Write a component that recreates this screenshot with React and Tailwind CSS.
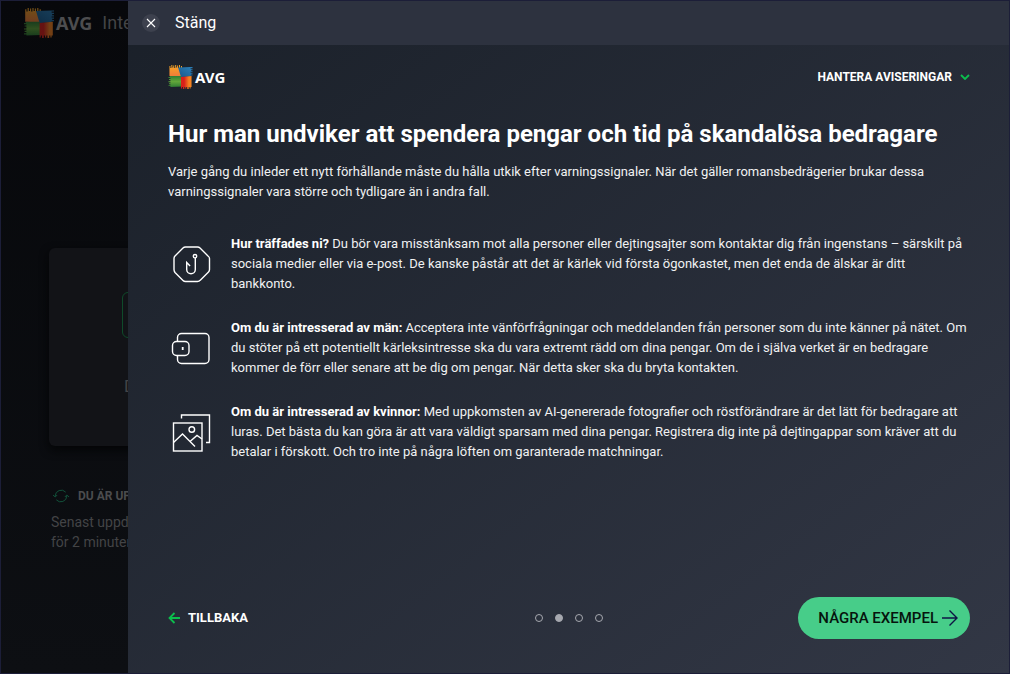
import { useState } from 'react';

const LOGO_COLORS = {
  orange: '#f7a823',
  orangeDark: '#ee7a3a',
  blue: '#2c80b8',
  blueDark: '#17598c',
  green: '#62a63a',
  greenDark: '#2f7d33',
  red: '#d9201a',
  redDark: '#f58220',
};

const AvgMark = ({ id, className }) => (
  <svg viewBox="0 0 50 50" className={className} aria-hidden="true">
    <defs>
      <linearGradient id={`${id}-o`} x1="0" y1="0" x2="0" y2="1">
        <stop offset="0" stopColor={LOGO_COLORS.orange} />
        <stop offset="1" stopColor={LOGO_COLORS.orangeDark} />
      </linearGradient>
      <linearGradient id={`${id}-b`} x1="1" y1="0" x2="0" y2="1">
        <stop offset="0" stopColor={LOGO_COLORS.blue} />
        <stop offset="1" stopColor={LOGO_COLORS.blueDark} />
      </linearGradient>
      <linearGradient id={`${id}-g`} x1="0" y1="0" x2="0" y2="1">
        <stop offset="0" stopColor={LOGO_COLORS.greenDark} />
        <stop offset="0.5" stopColor={LOGO_COLORS.green} />
        <stop offset="1" stopColor={LOGO_COLORS.greenDark} />
      </linearGradient>
      <linearGradient id={`${id}-r`} x1="0" y1="0" x2="1" y2="0">
        <stop offset="0.3" stopColor={LOGO_COLORS.red} />
        <stop offset="0.75" stopColor={LOGO_COLORS.redDark} />
      </linearGradient>
    </defs>
    <path fill={`url(#${id}-o)`} d="M2 23V2h2v4h2V0h2v5h2V1h2v5h2V0h2v5h2V1h2v5h2V0h2v6h2V2h2v4h-5l5 18z" />
    <path fill={`url(#${id}-b)`} d="M20 5l25-1h5v2h-4v2h4v2h-3v2h3v2h-4v2h4v2h-3v2h3v2h-4v2h2L26 25z" />
    <path fill={`url(#${id}-g)`} d="M2 23h24l4 22-26 1v-2H0v-2h4v-2H1v-2h3v-2H0v-2h4v-3H1v-2h3v-2H0v-2h3v-2H0z" />
    <path fill={`url(#${id}-r)`} d="M26 25l22-2v23h-2v3h-2v-3h-2v4h-3v-4h-2v3h-2v-3h-2v4h-3v-4h-2v3h-2z" />
  </svg>
);

const HookIcon = () => (
  <svg viewBox="0 1 48 48" className="h-12 w-12 shrink-0" fill="none" stroke="#fff" strokeWidth="1.4" aria-hidden="true">
    <path strokeLinejoin="round" d="M17.5 8h12q1.5 0 2.500 1l8 8q1.500 1 1.500 2.500v11q0 1.500-1 2.500l-8 8q-1.500 1.500-3 1.500h-12q-1.500 0-2.500-1l-8-8q-1-1.500-1-3v-11q0-1.500 1-2.500l8-8q1-1 2.500-1z" />
    <circle cx="27" cy="17.200" r="1.700" />
    <path d="M27.300 19v11.500a4.300 4.300 0 0 1-8.600 0V23.500l3.400 3.500" />
  </svg>
);

const WalletIcon = () => (
  <svg viewBox="0 1 48 48" className="h-12 w-12 shrink-0" fill="none" stroke="#fff" strokeWidth="1.4" aria-hidden="true">
    <path d="M9.500 19v-4.500a4 4 0 0 1 4-4H37a4 4 0 0 1 4 4V36.500a4 4 0 0 1-4 4H13.500a4 4 0 0 1-4-4v-4" />
    <rect x="4.500" y="18.500" width="16.500" height="14" rx="4" />
    <path strokeWidth="1.800" d="M14.700 24v3" />
  </svg>
);

const PicturesIcon = () => (
  <svg viewBox="0 1 48 48" className="h-12 w-12 shrink-0" fill="none" stroke="#fff" strokeWidth="1.4" aria-hidden="true">
    <path d="M13.500 11.500V8h28v27.500H38" />
    <rect x="5.500" y="16" width="28.500" height="28" />
    <circle cx="23.800" cy="22.500" r="2.800" />
    <path d="M5.500 35.500l9-8.500 12.500 12.500M22 34.500l7-6 5 3.500" />
  </svg>
);

const TIPS = [
  {
    icon: HookIcon,
    lead: 'Hur träffades ni?',
    text: 'Du bör vara misstänksam mot alla personer eller dejtingsajter som kontaktar dig från ingenstans – särskilt på sociala medier eller via e-post. De kanske påstår att det är kärlek vid första ögonkastet, men det enda de älskar är ditt bankkonto.',
  },
  {
    icon: WalletIcon,
    lead: 'Om du är intresserad av män:',
    text: 'Acceptera inte vänförfrågningar och meddelanden från personer som du inte känner på nätet. Om du stöter på ett potentiellt kärleksintresse ska du vara extremt rädd om dina pengar. Om de i själva verket är en bedragare kommer de förr eller senare att be dig om pengar. När detta sker ska du bryta kontakten.',
  },
  {
    icon: PicturesIcon,
    lead: 'Om du är intresserad av kvinnor:',
    text: 'Med uppkomsten av AI-genererade fotografier och röstförändrare är det lätt för bedragare att luras. Det bästa du kan göra är att vara väldigt sparsam med dina pengar. Registrera dig inte på dejtingappar som kräver att du betalar i förskott. Och tro inte på några löften om garanterade matchningar.',
  },
];

/* Dimmed application window behind the drawer */
const Backdrop = () => (
  <aside className="flex w-[127px] shrink-0 flex-col overflow-hidden bg-linear-to-b from-[#07080b] to-[#0d0f13] whitespace-nowrap">
    <div className="flex items-center pt-[7px] pl-[23px]">
      <AvgMark id="dim" className="h-[30px] w-[30px] shrink-0 opacity-45" />
      <span className="ml-[2px] font-['Noto_Sans'] text-[18px] leading-[30px] font-bold text-[#4d4d4f]">AVG</span>
      <span className="ml-[10px] text-[18px] leading-[30px] text-[#434446]">Inte</span>
    </div>

    <div className="mt-[210px] ml-12 flex h-[198px] w-[220px] shrink-0 flex-col rounded-md bg-[#121317] pt-11 pl-[73px] shadow-[0_4px_10px_#040506]">
      <div className="h-[46px] w-[54px] rounded-md border border-[#0f4a2a]"></div>
      <p className="mt-9 pl-[2px] text-[17px] leading-6 text-[#434446]">D</p>
    </div>

    <div className="mt-10 flex items-center gap-[9px] pl-[52px]">
      <svg viewBox="0 0 16 16" className="h-4 w-4 shrink-0" fill="none" stroke="#12513a" aria-hidden="true">
        <path d="M2.200 8.500V8a6 6 0 0 1 10.500-3.800M13.800 7.500V8a6 6 0 0 1-10.500 3.800" />
        <path d="M0 7l2.200 2 2-2M16 9l-2.200-2-2 2" />
      </svg>
      <span className="text-[12px] leading-5 font-bold text-[#4b4c4e]">DU ÄR UP</span>
    </div>
    <p className="mt-[6px] pl-[50px] text-[14px] leading-5 text-[#434446]">
      Senast uppd
      <br />
      för 2 minuter
    </p>
  </aside>
);

const App = () => {
  const [page, setPage] = useState(1);

  return (
    <div className="flex min-h-screen border border-[#1c1e38] bg-[#0a0b0f] font-[Roboto,sans-serif]">
      <Backdrop />

      <main className="flex min-w-0 flex-1 flex-col bg-linear-to-br from-[#1a2029] to-[#323745]">
        {/* Title bar */}
        <header className="flex h-11 items-center gap-[15px] bg-[#2d323f] px-[14px]">
          <button aria-label="Stäng" className="flex h-[18px] w-[18px] items-center justify-center rounded-full bg-[#3d414e]">
            <svg viewBox="0 0 10 10" className="h-[10px] w-[10px]" stroke="#fff" strokeWidth="1.100" aria-hidden="true">
              <path d="M1 1l8 8M9 1l-8 8" />
            </svg>
          </button>
          <span className="text-[16px] leading-6 text-white">Stäng</span>
        </header>

        <div className="flex flex-1 flex-col pt-5 pr-[39px] pb-[34px] pl-10">
          <div className="flex h-6 items-center justify-between">
            <div className="flex items-center gap-[2px] text-white">
              <AvgMark id="main" className="h-6 w-[25px]" />
              <span className="font-['Noto_Sans'] text-[15px] leading-6 font-bold">AVG</span>
            </div>
            <button className="flex items-center gap-2 text-[12px] leading-5 font-bold text-white">
              HANTERA AVISERINGAR
              <svg viewBox="0 0 10 6" className="h-[6px] w-[10px]" fill="none" stroke="#0cbf4d" strokeWidth="1.800" aria-hidden="true">
                <path d="M1 1l4 4 4-4" />
              </svg>
            </button>
          </div>

          <h1 className="mt-[29px] text-[24px] leading-8 font-bold text-white">
            Hur man undviker att spendera pengar och tid på skandalösa bedragare
          </h1>
          <p className="mt-3 text-[13px] leading-5 text-[#f0f1f2]">
            Varje gång du inleder ett nytt förhållande måste du hålla utkik efter varningssignaler. När det gäller romansbedrägerier brukar dessa varningssignaler vara större och tydligare än i andra fall.
          </p>

          <ul className="mt-8 flex flex-col gap-6">
            {TIPS.map(({ icon: Icon, lead, text }) => (
              <li key={lead} className="flex items-center gap-[15px]">
                <Icon />
                <p className="text-[13px] leading-5 text-[#f0f1f2]">
                  <strong className="font-bold text-white">{lead}</strong> {text}
                </p>
              </li>
            ))}
          </ul>

          {/* Footer navigation */}
          <footer className="mt-auto grid grid-cols-[1fr_auto_1fr] items-center">
            <button className="flex items-center gap-2 justify-self-start text-[13px] leading-5 font-bold text-white">
              <svg viewBox="0 0 12 12" className="h-3 w-3" fill="none" stroke="#0cbf4d" strokeWidth="1.800" aria-hidden="true">
                <path d="M12 6H2M6.500 1L1.500 6l5 5" />
              </svg>
              TILLBAKA
            </button>
            <div className="flex gap-3">
              {[0, 1, 2, 3].map((index) => (
                <button
                  key={index}
                  aria-label={`Sida ${index + 1}`}
                  onClick={() => setPage(index)}
                  className={`h-2 w-2 rounded-full border border-[#a6a8af] ${page === index ? 'bg-[#a6a8af]' : ''}`}
                />
              ))}
            </div>
            <button className="flex h-[42px] items-center gap-1 justify-self-end rounded-full bg-[#47cd89] pr-3 pl-5 text-[15px] leading-5 font-medium text-[#06140d]">
              NÅGRA EXEMPEL
              <svg viewBox="0 0 16 16" className="h-4 w-4" fill="none" stroke="#0e1445" strokeWidth="1.400" aria-hidden="true">
                <path d="M0 8h15M7.500 .5L15 8l-7.500 7.500" />
              </svg>
            </button>
          </footer>
        </div>
      </main>
    </div>
  );
};

export default App;
